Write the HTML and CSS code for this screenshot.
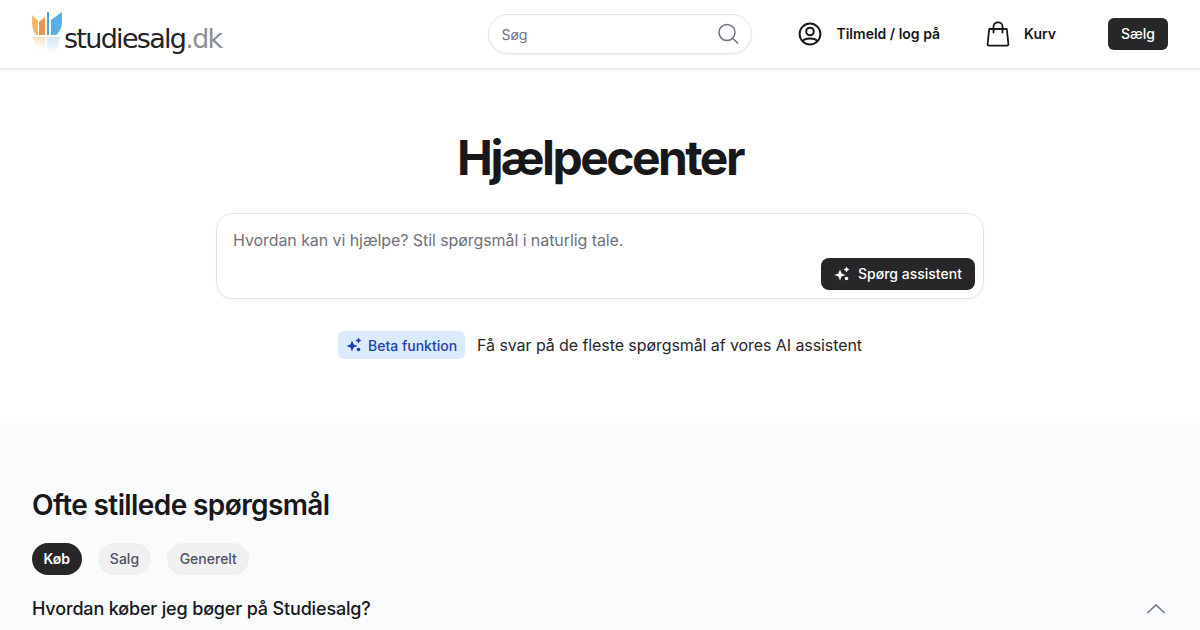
FILE: index.html
```html
<!DOCTYPE html>
<html lang="da">
<head>
    <meta charset="UTF-8">
    <meta name="viewport" content="width=device-width, initial-scale=1.0">
    <title>Hjælpecenter</title>
    <link rel="stylesheet" href="styles.css">
</head>
<body>

<header class="topbar">
    <a class="logo" href="#">
        <svg class="logo-mark" width="32" height="42" viewBox="0 0 32 42">
            <defs>
                <linearGradient id="fadeOrange" x1="0" y1="0" x2="0" y2="1">
                    <stop offset="0" stop-color="#efc9a0" stop-opacity="0.55"/>
                    <stop offset="1" stop-color="#efc9a0" stop-opacity="0"/>
                </linearGradient>
                <linearGradient id="fadeBlue" x1="0" y1="0" x2="0" y2="1">
                    <stop offset="0" stop-color="#a9d3f0" stop-opacity="0.55"/>
                    <stop offset="1" stop-color="#a9d3f0" stop-opacity="0"/>
                </linearGradient>
            </defs>
            <path d="M0 3 L6 9 L6 23 L4 23 Q0 18 0 11 Z" fill="#f2b670"/>
            <path d="M7 10 L13 5 L13 23 L7 23 Z" fill="#e9984a"/>
            <path d="M15 0 L17 0 L17 23 L15 23 Z" fill="#4fa3de"/>
            <path d="M19 8 L30 0 L30 11 Q29 19 24 23 L19 23 Z" fill="#5aaee6"/>
            <path d="M1 25 L13 25 L13 38 L6 38 Z" fill="url(#fadeOrange)"/>
            <path d="M15 25 L28 25 L24 42 L15 40 Z" fill="url(#fadeBlue)"/>
        </svg>
        <span class="logo-text">studiesalg<span class="logo-tld">.dk</span></span>
    </a>
    <div class="topbar-right">
        <div class="search">
            <span class="search-text">Søg</span>
            <svg width="24" height="24" viewBox="0 0 24 24" fill="none" stroke="#6b7280" stroke-width="1.5" stroke-linecap="round">
                <circle cx="11" cy="10.5" r="8"/>
                <path d="M17 16.5 L21.5 21"/>
            </svg>
        </div>
        <a class="nav-link nav-login" href="#">
            <svg width="24" height="24" viewBox="0 0 24 24" fill="none" stroke="#18181b" stroke-width="2">
                <circle cx="12" cy="12" r="10.4"/>
                <circle cx="12" cy="9.5" r="3.8"/>
                <path d="M4.8 19 C7 15.6 17 15.6 19.2 19"/>
            </svg>
            <span class="nav-label">Tilmeld / log på</span>
        </a>
        <a class="nav-link nav-cart" href="#">
            <svg width="24" height="26" viewBox="0 0 24 26" fill="none" stroke="#18181b" stroke-width="1.8" stroke-linejoin="round" stroke-linecap="round">
                <path d="M3.2 8 H20.8 L22.4 23 Q22.5 24.6 21 24.6 H3 Q1.5 24.6 1.6 23 Z"/>
                <path d="M7.5 11.5 V5.5 C7.5 0 16.5 0 16.5 5.5 V11.5"/>
            </svg>
            <span class="nav-label">Kurv</span>
        </a>
        <button class="btn-dark btn-sell">Sælg</button>
    </div>
</header>

<main>
    <section class="hero">
        <h1>Hjælpecenter</h1>
        <div class="ask-box">
            <div class="ask-placeholder">Hvordan kan vi hjælpe? Stil spørgsmål i naturlig tale.</div>
            <button class="btn-dark btn-ask">
                <svg width="16" height="16" viewBox="0 0 16 16" fill="#fff">
                    <path d="M6 3.5 L7.6 7.4 L11.5 9 L7.6 10.6 L6 14.5 L4.4 10.6 L0.5 9 L4.4 7.4 Z"/>
                    <path d="M12.5 0.5 L13.5 2.5 L15.5 3.5 L13.5 4.5 L12.5 6.5 L11.5 4.5 L9.5 3.5 L11.5 2.5 Z"/>
                    <circle cx="12.5" cy="12.5" r="1.8"/>
                </svg>
                <span class="nav-label">Spørg assistent</span>
            </button>
        </div>
        <div class="beta-row">
            <span class="beta-badge">
                <svg width="16" height="16" viewBox="0 0 16 16" fill="#1e40af">
                    <path d="M6 3.5 L7.6 7.4 L11.5 9 L7.6 10.6 L6 14.5 L4.4 10.6 L0.5 9 L4.4 7.4 Z"/>
                    <path d="M12.5 0.5 L13.5 2.5 L15.5 3.5 L13.5 4.5 L12.5 6.5 L11.5 4.5 L9.5 3.5 L11.5 2.5 Z"/>
                    <circle cx="12.5" cy="12.5" r="1.8"/>
                </svg>
                Beta funktion
            </span>
            <span class="beta-text">Få svar på de fleste spørgsmål af vores AI assistent</span>
        </div>
    </section>

    <section class="faq">
        <h2>Ofte stillede spørgsmål</h2>
        <div class="tabs">
            <button class="tab tab-active"><span class="nav-label">Køb</span></button>
            <button class="tab"><span class="nav-label">Salg</span></button>
            <button class="tab"><span class="nav-label">Generelt</span></button>
        </div>
        <div class="question">
            <span>Hvordan køber jeg bøger på Studiesalg?</span>
            <svg width="20" height="10" viewBox="0 0 20 10" fill="none" stroke="#6b7280" stroke-width="1.5">
                <path d="M1.5 9 L10 1 L18.5 9"/>
            </svg>
        </div>
    </section>
</main>

</body>
</html>
```

FILE: styles.css
```css
* {
    box-sizing: border-box;
}
html, body {
    height: 630px;
    overflow: hidden;
}
body {
    margin: 0;
    font-family: Inter, "Noto Sans", sans-serif;
    color: #18181b;
    background: #fff;
}
a {
    color: inherit;
    text-decoration: none;
}
button {
    font-family: inherit;
    border: none;
}
.topbar {
    height: 69px;
    padding: 0 32px;
    display: flex;
    align-items: center;
    justify-content: space-between;
    border-bottom: 1px solid #e5e7eb;
    box-shadow: 0 1px 2px rgba(15, 40, 80, 0.08);
}
.logo {
    display: flex;
    align-items: flex-start;
    height: 46px;
    margin-top: 2px;
}
.logo-mark {
    flex: none;
}
.logo-text {
    padding-top: 12px;
    font-family: "DejaVu Sans", sans-serif;
    font-size: 27px;
    line-height: 30px;
    letter-spacing: -1.7px;
    color: #232325;
}
.logo-tld {
    color: #8f8f91;
}
.topbar-right {
    display: flex;
    align-items: center;
}
.search {
    width: 264px;
    height: 40px;
    margin-right: 46px;
    padding: 0 11px 0 12px;
    display: flex;
    align-items: center;
    justify-content: space-between;
    border: 1px solid #e2e3e6;
    border-radius: 20px;
    box-shadow: 0 1px 2px rgba(0, 0, 0, 0.06);
}
.search-text {
    font-size: 14px;
    color: #6b7280;
}
.nav-link {
    display: flex;
    align-items: center;
    font-size: 14px;
    font-weight: 600;
}
.nav-label {
    display: block;
    margin-bottom: 2px;
}
.nav-login {
    gap: 15px;
    margin-right: 46px;
}
.nav-login svg {
    margin-right: -1px;
}
.nav-cart {
    gap: 14px;
    margin-right: 52px;
}
.btn-dark {
    background: #27272a;
    color: #fff;
    font-weight: 500;
    font-size: 14px;
}
.btn-sell {
    width: 60px;
    height: 32px;
    padding-bottom: 2px;
    border-radius: 6px;
}
.hero {
    height: 354px;
    padding-top: 60px;
    display: flex;
    flex-direction: column;
    align-items: center;
}
h1 {
    margin: 0 0 26px;
    font-size: 48px;
    line-height: 58px;
    font-weight: 650;
    letter-spacing: -2.55px;
}
.ask-box {
    width: 768px;
    height: 86px;
    padding: 8px;
    display: flex;
    flex-direction: column;
    justify-content: space-between;
    align-items: flex-end;
    border: 1px solid #e4e4e7;
    border-radius: 16px;
    box-shadow: 0 1px 2px rgba(0, 0, 0, 0.05);
}
.ask-placeholder {
    align-self: flex-start;
    padding: 8px 8px 0;
    font-size: 16px;
    line-height: 20px;
    letter-spacing: -0.075px;
    color: #71717a;
}
.btn-ask {
    width: 154px;
    height: 32px;
    display: flex;
    align-items: center;
    justify-content: center;
    gap: 8px;
    border-radius: 8px;
}
.beta-row {
    margin-top: 32px;
    display: flex;
    align-items: center;
    gap: 12px;
}
.beta-badge {
    height: 28px;
    padding: 0 8px;
    display: flex;
    align-items: center;
    gap: 6px;
    background: #dbeafe;
    color: #1e40af;
    font-size: 14px;
    font-weight: 500;
    border-radius: 6px;
}
.beta-text {
    font-size: 16px;
    letter-spacing: -0.08px;
    color: #27272a;
}
.faq {
    height: 207px;
    padding: 64px 32px 0;
    background: #f9fbfd;
}
h2 {
    margin: 0 0 20px;
    font-size: 28px;
    line-height: 36px;
    font-weight: 600;
    letter-spacing: -0.6px;
}
.tabs {
    display: flex;
    gap: 16px;
}
.tab {
    height: 32px;
    padding: 0 12.3px;
    font-size: 14px;
    font-weight: 500;
    color: #52525b;
    background: #f0f0f2;
    border-radius: 16px;
}
.tab-active {
    padding: 0 11.5px;
    background: #27272a;
    color: #fff;
    font-weight: 600;
}
.question {
    margin-top: 22px;
    padding-right: 2px;
    display: flex;
    align-items: center;
    justify-content: space-between;
    font-size: 18px;
    line-height: 24px;
    letter-spacing: -0.16px;
    font-weight: 500;
}
```
